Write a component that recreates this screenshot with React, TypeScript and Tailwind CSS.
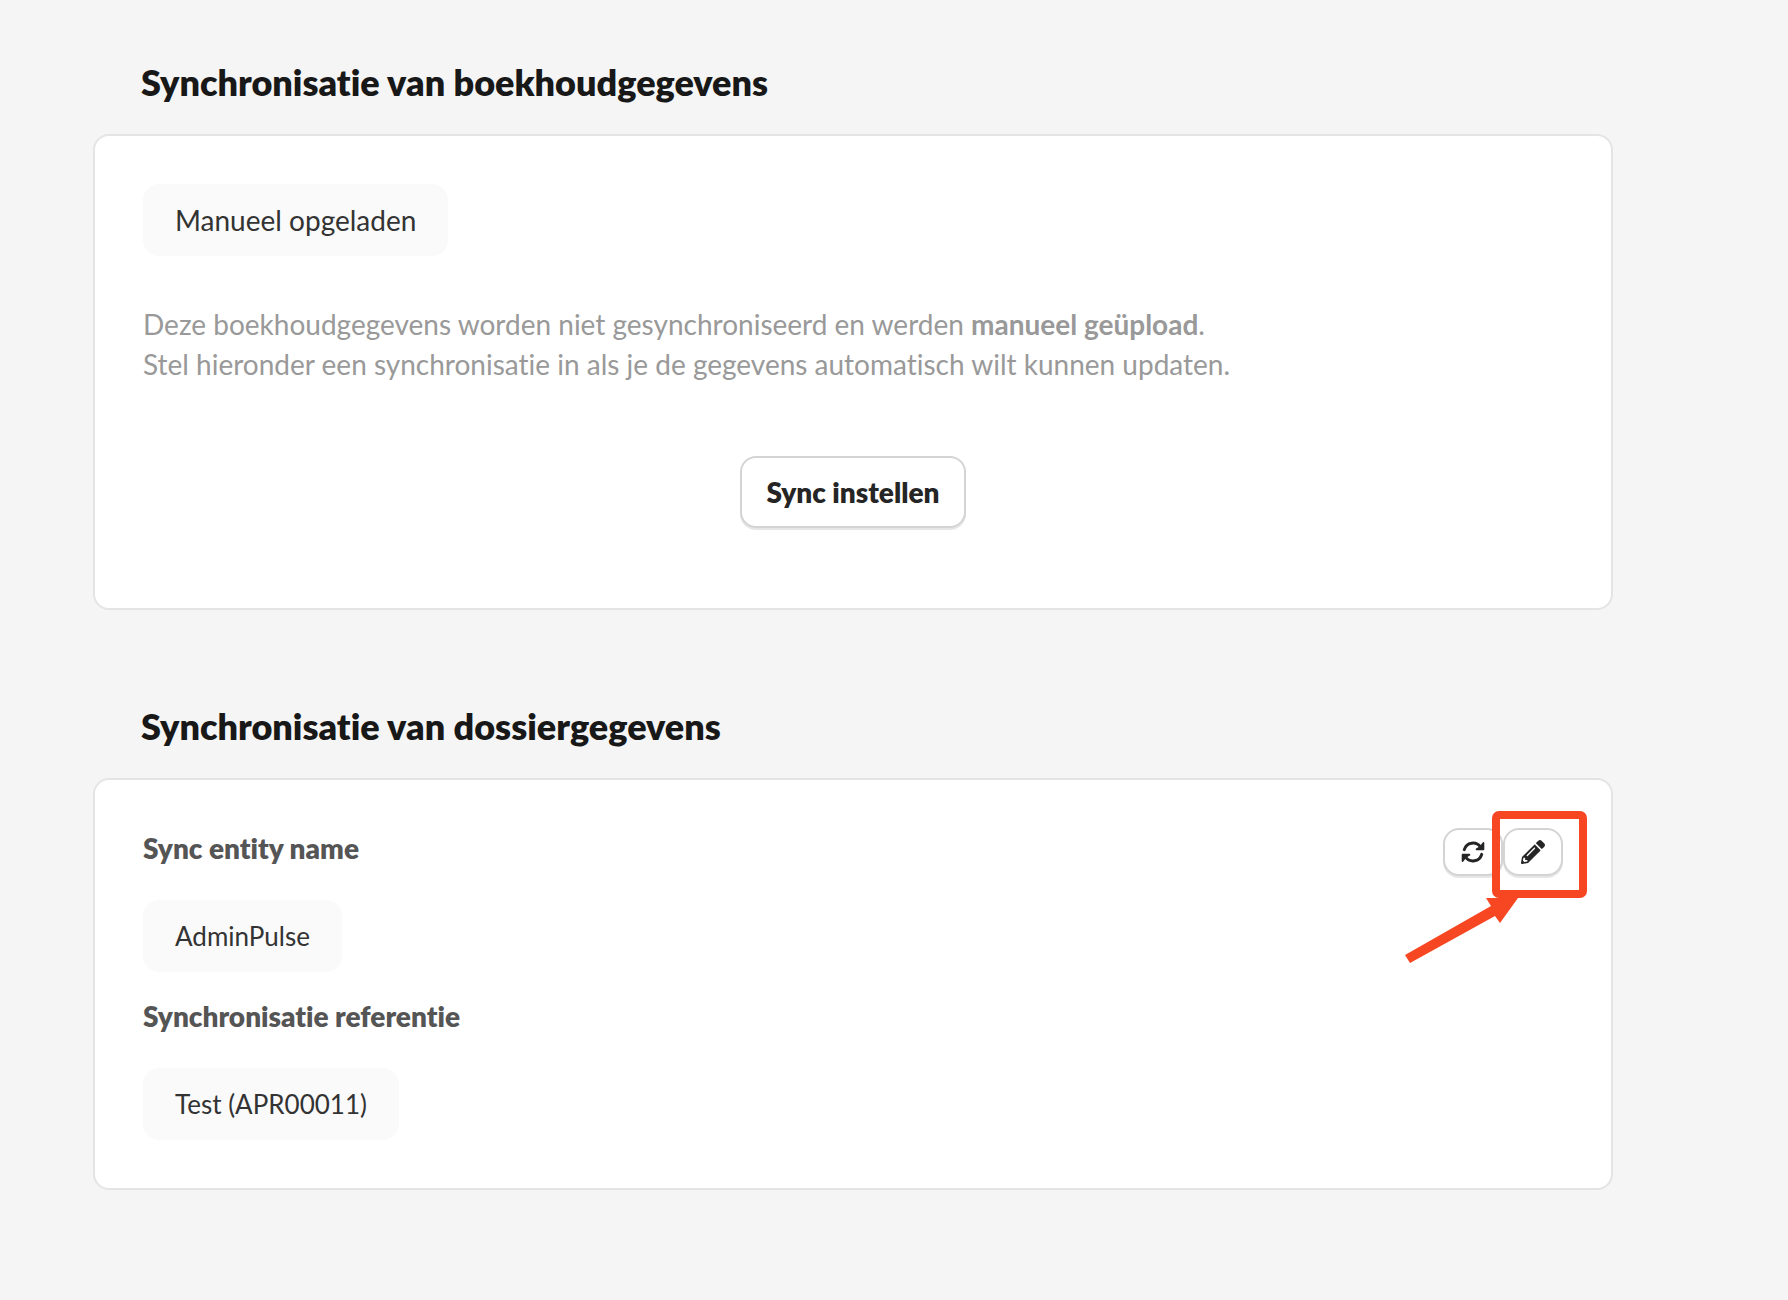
import type { ReactNode } from 'react'
import { FaPencilAlt } from 'react-icons/fa'

const Section = ({ title, children }: { title: string; children: ReactNode }) => (
  <section>
    <h2 className="pl-12 text-[36px] leading-[48px] font-extrabold text-[#181818]">{title}</h2>
    <div className="mt-7 rounded-2xl border-2 border-[#e4e4e4] bg-white p-12">{children}</div>
  </section>
)

const buttonStyle = 'rounded-2xl border-2 border-[#d4d4d4] bg-white text-[#252525] shadow-[0_2px_0_#e6e6e6]'

const RefreshIcon = () => (
  <svg viewBox="0 0 24 24" className="size-6" fill="none" stroke="currentColor" strokeLinecap="round" strokeLinejoin="round">
    <g strokeWidth="3">
      <path d="M3.3 9.6A9 9 0 0 1 19.4 7" />
      <path d="M20.7 14.4A9 9 0 0 1 4.6 17" />
    </g>
    <g strokeWidth="1.8" fill="currentColor">
      <path d="M22.4 3V9.3H15.6L19.4 7z" />
      <path d="M1.6 21V14.7H8.4L4.6 17z" />
    </g>
  </svg>
)

// Red frame and arrow that point at the edit button
const Highlight = () => (
  <svg viewBox="0 0 184 154" className="pointer-events-none absolute -top-[18px] -right-6 h-[154px] w-[184px]" fill="none">
    <rect x="93" y="5" width="87" height="79" rx="3" stroke="#f64722" strokeWidth="8" />
    <path d="M2 145 88 96 83 88H115L97 113 92 106 7 153z" fill="#f64722" />
  </svg>
)

export default function App() {
  return (
    <main className="min-h-screen space-y-[92px] bg-[#f5f5f5] pt-[58px] pr-[175px] pb-[110px] pl-[93px] font-['Lato',sans-serif] text-[28px] leading-10 [font-variant-ligatures:none]">
      <Section title="Synchronisatie van boekhoudgegevens">
        <div className="w-fit rounded-2xl bg-[#fafafa] px-8 py-4 text-[#333]">Manueel opgeladen</div>
        <p className="mt-12 text-[#999]">
          Deze boekhoudgegevens worden niet gesynchroniseerd en werden <strong>manueel geüpload</strong>.
          <br />
          Stel hieronder een synchronisatie in als je de gegevens automatisch wilt kunnen updaten.
        </p>
        <div className="mt-18 mb-8 flex justify-center">
          <button type="button" className={`${buttonStyle} px-6 py-[14px] font-extrabold`}>Sync instellen</button>
        </div>
      </Section>

      <Section title="Synchronisatie van dossiergegevens">
        <div className="flex items-start justify-between">
          <dl>
            <dt className="font-extrabold text-[#555]">Sync entity name</dt>
            <dd className="mt-8 w-fit rounded-2xl bg-[#fafafa] px-8 py-4 text-[26px] text-[#333]">AdminPulse</dd>
            <dt className="mt-6 font-extrabold text-[#555]">Synchronisatie referentie</dt>
            <dd className="mt-8 w-fit rounded-2xl bg-[#fafafa] px-8 py-4 text-[26px] text-[#333]">Test (APR00011)</dd>
          </dl>
          <div className="relative flex">
            <button type="button" aria-label="Synchroniseren" className={`${buttonStyle} flex h-12 w-[60px] items-center justify-center`}>
              <RefreshIcon />
            </button>
            <button type="button" aria-label="Bewerken" className={`${buttonStyle} flex h-12 w-[60px] items-center justify-center`}>
              <FaPencilAlt className="size-6" />
            </button>
            <Highlight />
          </div>
        </div>
      </Section>
    </main>
  )
}
